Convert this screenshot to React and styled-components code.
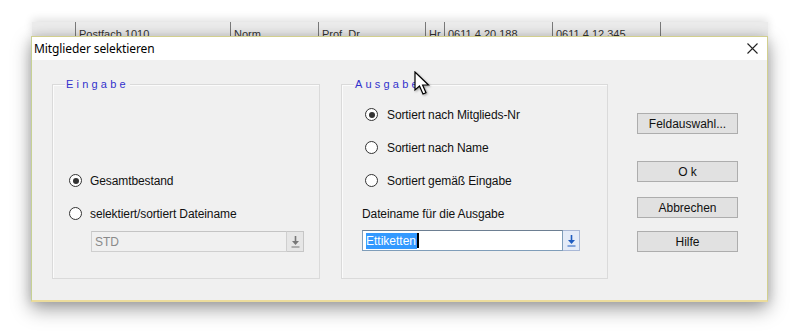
import React from "react";
import styled, { createGlobalStyle } from "styled-components";

const Global = createGlobalStyle`
  html, body { margin: 0; padding: 0; background: #ffffff; }
  body { font-family: "Liberation Sans", Arial, sans-serif; font-size: 12px; color: #000; }
  * { box-sizing: border-box; }
`;

const Page = styled.div`
  position: relative;
  width: 800px;
  height: 334px;
  padding: 22px 0 0 32px;
  overflow: hidden;
`;

const BehindWindow = styled.div`
  display: flex;
  width: 736px;
  height: 14px;
  background: #ececec;
  box-shadow: 0 -3px 8px rgba(0, 0, 0, 0.12);
  overflow: hidden;
`;

const BehindCell = styled.div`
  width: ${(p) => p.$w}px;
  flex: none;
  height: 100%;
  border-left: ${(p) => (p.$line ? "1px solid #7a7a7a" : "none")};
  padding: 6px 0 0 3px;
  font-size: 11px;
  line-height: 13px;
  color: #333;
  white-space: nowrap;
  overflow: hidden;
`;

const Dialog = styled.div`
  position: relative;
  z-index: 1;
  margin: 0 0 0 -1px;
  width: 737px;
  border: 1px solid #d2cf8e;
  border-left-color: #c6d193;
  border-bottom: 2px solid #ecdc9c;
  background: #f0f0f0;
  box-shadow: 0 7px 18px rgba(0, 0, 0, 0.38), 0 0 10px rgba(0, 0, 0, 0.12);
`;

const TitleBar = styled.div`
  height: 23px;
  background: #ffffff;
  display: flex;
  align-items: center;
  justify-content: space-between;
  padding: 0 9px 0 2px;
`;

const Title = styled.span`
  font-family: "Noto Sans", "Open Sans", sans-serif;
  font-size: 12px;
  color: #000;
  letter-spacing: -0.1px;
`;

const Body = styled.div`
  height: 240px;
  display: flex;
  align-items: flex-start;
  padding: 24px 0 0 20px;
`;

const Group = styled.div`
  position: relative;
  width: ${(p) => p.$w}px;
  height: 195px;
  margin-left: ${(p) => p.$ml || 0}px;
  border: 1px solid #dadada;
  box-shadow: inset 1px 1px 0 #fbfbfb;
  padding: 13px 0 0 ${(p) => p.$pl}px;
  display: flex;
  flex-direction: column;
`;

const GroupTitle = styled.span`
  position: absolute;
  top: -8px;
  left: 12px;
  background: #f0f0f0;
  padding: 0 1px;
  font-size: 11px;
  line-height: 14px;
  letter-spacing: 3.2px;
  color: #3232cc;
`;

const Spacer = styled.div`
  height: ${(p) => p.$h}px;
  flex: none;
`;

const Row = styled.div`
  height: 33px;
  flex: none;
  display: flex;
  align-items: center;
  padding-left: ${(p) => p.$indent || 0}px;
`;

const RadioCircle = styled.span`
  width: 13px;
  height: 13px;
  border-radius: 50%;
  border: 1px solid #333;
  background: #fff;
  display: flex;
  align-items: center;
  justify-content: center;
  flex: none;
  margin-right: ${(p) => p.$gap}px;
  &::after {
    content: "";
    width: 6px;
    height: 6px;
    border-radius: 50%;
    background: ${(p) => (p.$checked ? "#333" : "transparent")};
  }
`;

const Label = styled.span`
  font-size: 12px;
  color: #111;
  letter-spacing: -0.1px;
`;

const FieldWrap = styled.div`
  display: flex;
  height: 21px;
  width: ${(p) => p.$w}px;
  margin: ${(p) => p.$mt || 0}px 0 0 ${(p) => p.$ml || 0}px;
`;

const Field = styled.div`
  flex: 1;
  height: 100%;
  display: flex;
  align-items: center;
  padding-left: 3px;
  border: 1px solid ${(p) => (p.$active ? "#7f9db9" : "#cfcfcf")};
  border-top-color: ${(p) => (p.$active ? "#6d7f92" : "#c4c4c4")};
  background: ${(p) => (p.$active ? "#ffffff" : "#f0f0f0")};
  color: ${(p) => (p.$active ? "#000" : "#8a8a8a")};
  font-size: 12px;
`;

const Selected = styled.span`
  background: #3399ff;
  color: #fff;
  padding: 1px 1px 1px 0;
  line-height: 14px;
`;

const Caret = styled.span`
  display: inline-block;
  width: 2px;
  height: 15px;
  background: #000;
`;

const DropButton = styled.div`
  width: 17px;
  height: 100%;
  flex: none;
  display: flex;
  align-items: center;
  justify-content: center;
  border: 1px solid ${(p) => (p.$active ? "#a9b8d6" : "#c6c6c6")};
  border-left: none;
  background: ${(p) => (p.$active ? "#e4ebf7" : "#e6e6e6")};
  color: ${(p) => (p.$active ? "#1e5cc0" : "#777")};
`;

const ButtonCol = styled.div`
  display: flex;
  flex-direction: column;
  margin: 29px 0 0 29px;
  width: 101px;
`;

const Button = styled.div`
  height: 21px;
  margin-top: ${(p) => p.$mt || 0}px;
  border: 1px solid #adadad;
  background: #e1e1e1;
  display: flex;
  align-items: center;
  justify-content: center;
  font-size: 12px;
  color: #111;
`;

const Cursor = styled.svg`
  position: absolute;
  left: 414px;
  top: 71px;
  z-index: 2;
  filter: drop-shadow(1px 1px 1px rgba(0, 0, 0, 0.35));
`;

const DownArrow = () => (
  <svg width="9" height="13" viewBox="0 0 9 13">
    <line x1="4.5" y1="1" x2="4.5" y2="7" stroke="currentColor" strokeWidth="1.6" />
    <polygon points="1,6 8,6 4.5,10" fill="currentColor" />
    <line x1="0.5" y1="12" x2="8.5" y2="12" stroke="currentColor" strokeWidth="1" />
  </svg>
);

const Radio = ({ checked, gap, indent, children }) => (
  <Row $indent={indent}>
    <RadioCircle $checked={checked} $gap={gap} />
    <Label>{children}</Label>
  </Row>
);

export default function App() {
  return (
    <>
      <Global />
      <Page>
        <BehindWindow>
          <BehindCell $w={43} />
          <BehindCell $w={155} $line>Postfach 1010</BehindCell>
          <BehindCell $w={88} $line>Norm</BehindCell>
          <BehindCell $w={107} $line>Prof. Dr.</BehindCell>
          <BehindCell $w={19} $line>Hr</BehindCell>
          <BehindCell $w={108} $line>0611 4 20 188</BehindCell>
          <BehindCell $w={108} $line>0611 4 12 345</BehindCell>
          <BehindCell $w={108} $line />
        </BehindWindow>
        <Dialog>
          <TitleBar>
            <Title>Mitglieder selektieren</Title>
            <svg width="11" height="11" viewBox="0 0 11 11">
              <path d="M0.5 0.5 L10.5 10.5 M10.5 0.5 L0.5 10.5" stroke="#222" strokeWidth="1.1" />
            </svg>
          </TitleBar>
          <Body>
            <Group $w={268} $pl={16}>
              <GroupTitle>Eingabe</GroupTitle>
              <Spacer $h={66} />
              <Radio checked gap={8}>Gesamtbestand</Radio>
              <Radio gap={8}>selektiert/sortiert Dateiname</Radio>
              <FieldWrap $w={213} $ml={22} $mt={1}>
                <Field>STD</Field>
                <DropButton>
                  <DownArrow />
                </DropButton>
              </FieldWrap>
            </Group>
            <Group $w={267} $ml={21} $pl={20}>
              <GroupTitle>Ausgabe</GroupTitle>
              <Radio checked gap={9} indent={3}>Sortiert nach Mitglieds-Nr</Radio>
              <Radio gap={9} indent={3}>Sortiert nach Name</Radio>
              <Radio gap={9} indent={3}>Sortiert gemäß Eingabe</Radio>
              <Row>
                <Label>Dateiname für die Ausgabe</Label>
              </Row>
              <FieldWrap $w={218}>
                <Field $active>
                  <Selected>Ettiketten</Selected>
                  <Caret />
                </Field>
                <DropButton $active>
                  <DownArrow />
                </DropButton>
              </FieldWrap>
            </Group>
            <ButtonCol>
              <Button>Feldauswahl...</Button>
              <Button $mt={27}>O k</Button>
              <Button $mt={15}>Abbrechen</Button>
              <Button $mt={13}>Hilfe</Button>
            </ButtonCol>
          </Body>
        </Dialog>
        <Cursor width="16" height="25" viewBox="0 0 16 25">
          <path
            d="M1 1 L1 19 L5.5 15 L9 23 L12 21.7 L8.6 14 L14.5 14 Z"
            fill="#fff"
            stroke="#000"
            strokeWidth="1.2"
            strokeLinejoin="miter"
          />
        </Cursor>
      </Page>
    </>
  );
}
